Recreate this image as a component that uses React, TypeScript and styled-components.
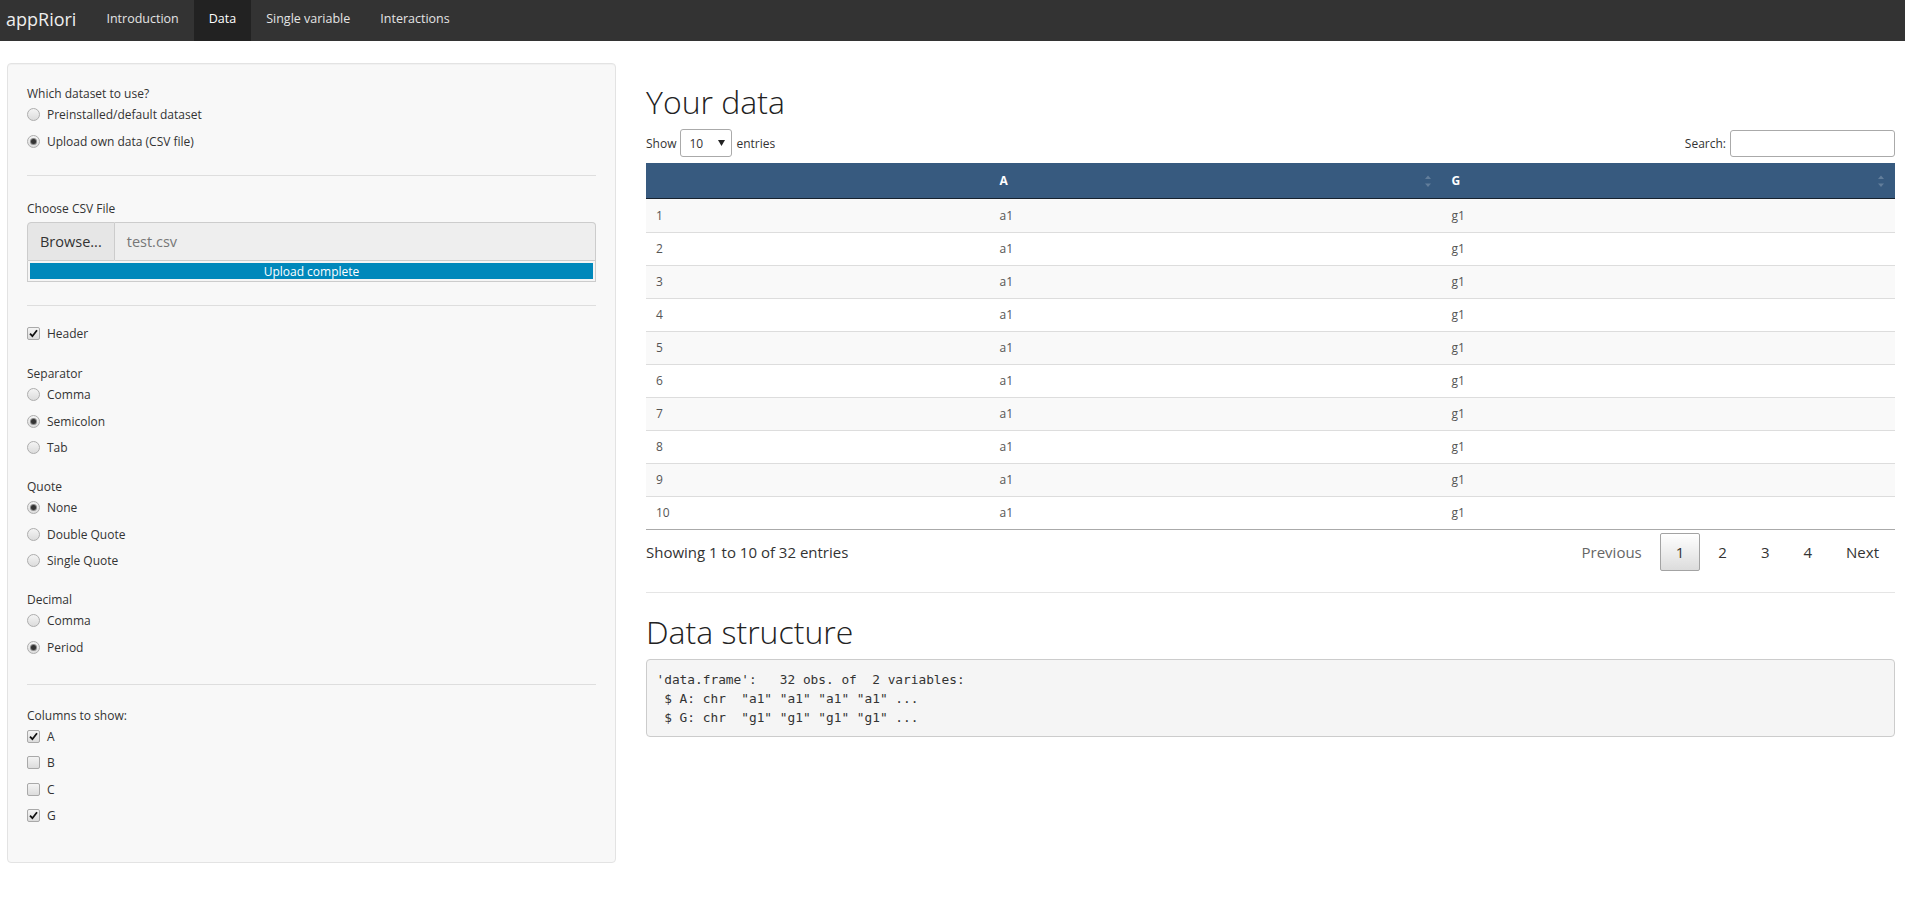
import React from 'react';
import styled, { createGlobalStyle } from 'styled-components';

const GlobalStyle = createGlobalStyle`
  html, body { margin: 0; padding: 0; background: #fff; }
  body { font-family: "Open Sans", "Liberation Sans", sans-serif; color: #333; }
  *, *::before, *::after { box-sizing: border-box; }
`;

const NavBar = styled.nav`
  display: flex;
  align-items: stretch;
  height: 41px;
  background: #333;
`;

const Brand = styled.div`
  display: flex;
  align-items: center;
  padding: 0 15px 4px 6px;
  font-size: 18px;
  color: #eee;
`;

const NavLink = styled.a<{ $active?: boolean }>`
  display: flex;
  align-items: center;
  padding: 0 15px 4px;
  font-size: 12.5px;
  color: ${p => (p.$active ? '#fff' : '#e4e4e4')};
  background: ${p => (p.$active ? '#222' : 'transparent')};
  text-decoration: none;
`;

const Page = styled.div`
  display: flex;
  align-items: flex-start;
  gap: 30px;
  padding: 22px 10px 40px 7px;
`;

const Sidebar = styled.aside`
  flex: none;
  width: 609px;
  background: #f8f8f8;
  border: 1px solid #e3e3e3;
  border-radius: 4px;
  padding: 21px 19px 38px;
  box-shadow: inset 0 1px 1px rgba(0, 0, 0, 0.03);
`;

const Group = styled.div<{ $gap?: number }>`
  display: flex;
  flex-direction: column;
  margin-bottom: ${p => p.$gap ?? 23}px;
`;

const GroupLabel = styled.div`
  font-size: 12px;
  line-height: 17px;
  margin-bottom: 4px;
  color: #333;
`;

const Options = styled.div`
  display: flex;
  flex-direction: column;
  gap: 9.5px;
`;

const Option = styled.label`
  display: flex;
  align-items: center;
  gap: 7px;
  height: 17px;
  font-size: 12px;
  color: #333;
`;

const Radio = styled.span<{ $checked?: boolean }>`
  position: relative;
  flex: none;
  width: 13px;
  height: 13px;
  border-radius: 50%;
  border: 1px solid #adadad;
  background: linear-gradient(#f4f4f4, #dcdcdc);
  &::after {
    content: '';
    display: ${p => (p.$checked ? 'block' : 'none')};
    position: absolute;
    left: 3px;
    top: 3px;
    width: 5px;
    height: 5px;
    border-radius: 50%;
    background: #333;
    box-shadow: 0 0 0 1px #8a8a8a;
  }
`;

const CheckBox = styled.span`
  display: flex;
  align-items: center;
  justify-content: center;
  flex: none;
  width: 13px;
  height: 13px;
  border-radius: 2px;
  border: 1px solid #a9a9a9;
  background: linear-gradient(#f4f4f4, #dcdcdc);
`;

const Divider = styled.hr<{ $before: number; $after: number }>`
  border: 0;
  border-top: 1px solid #dedede;
  margin: ${p => p.$before}px 0 ${p => p.$after}px;
`;

const FileGroup = styled.div`
  display: flex;
  height: 39px;
  margin-top: 1px;
`;

const BrowseButton = styled.span`
  display: flex;
  align-items: center;
  padding: 0 12px;
  font-size: 14.5px;
  color: #333;
  background: #e6e6e6;
  border: 1px solid #ccc;
  border-radius: 4px 0 0 0;
`;

const FileName = styled.span`
  flex: 1;
  display: flex;
  align-items: center;
  padding: 0 12px;
  font-size: 14.5px;
  color: #777;
  background: #eee;
  border: 1px solid #ccc;
  border-left: 0;
  border-radius: 0 4px 0 0;
`;

const Progress = styled.div`
  border: 1px solid #ccc;
  border-top: 0;
  background: #f5f5f5;
  padding: 2px;
`;

const ProgressBar = styled.div`
  height: 16px;
  background: #0088bb;
  color: #fff;
  font-size: 12px;
  line-height: 17px;
  text-align: center;
`;

const Main = styled.main`
  flex: 1;
  min-width: 0;
`;

const Heading = styled.h2`
  margin: 22px 0 11px;
  font-size: 32px;
  font-weight: 300;
  line-height: 33px;
  color: #222;
`;

const Toolbar = styled.div`
  display: flex;
  justify-content: space-between;
  align-items: center;
  height: 28px;
  margin-bottom: 6px;
  font-size: 12px;
  color: #333;
`;

const Inline = styled.div`
  display: flex;
  align-items: center;
  gap: 4px;
`;

const FakeSelect = styled.div`
  display: flex;
  align-items: center;
  justify-content: space-between;
  width: 52px;
  height: 28px;
  padding: 0 6px 0 8px;
  border: 1px solid #aaa;
  border-radius: 3px;
  background: #fff;
  font-size: 12px;
  color: #333;
`;

const SearchInput = styled.input`
  width: 165px;
  height: 27px;
  border: 1px solid #aaa;
  border-radius: 3px;
  background: #fff;
  margin: 0;
`;

const Table = styled.table`
  width: 100%;
  border-collapse: separate;
  border-spacing: 0;
  table-layout: fixed;
  font-size: 12px;
`;

const Th = styled.th<{ $w: string }>`
  width: ${p => p.$w};
  height: 36px;
  padding: 0 10px;
  background: #375a7f;
  color: #fff;
  font-weight: 700;
  text-align: left;
  border-bottom: 1px solid #17222e;
`;

const HeadInner = styled.div`
  display: flex;
  align-items: center;
`;

const SortIcon = styled.svg`
  margin-left: auto;
  flex: none;
`;

const Td = styled.td<{ $odd: boolean; $first: boolean; $last: boolean }>`
  padding: 8px 10px;
  line-height: 16px;
  color: #555;
  background: ${p => (p.$odd ? '#f9f9f9' : '#fff')};
  border-top: 1px solid ${p => (p.$first ? 'transparent' : '#ddd')};
  border-bottom: ${p => (p.$last ? '1px solid #aaa' : '0')};
`;

const Footer = styled.div`
  display: flex;
  justify-content: space-between;
  align-items: center;
  padding-top: 3px;
`;

const Info = styled.div`
  font-size: 15px;
  color: #333;
`;

const Pagination = styled.div`
  display: flex;
`;

const PageButton = styled.span<{ $current?: boolean; $disabled?: boolean }>`
  margin-left: 2px;
  padding: 7px 15px;
  font-size: 15px;
  line-height: 22px;
  border-radius: 2px;
  border: 1px solid ${p => (p.$current ? '#a3a3a3' : 'transparent')};
  background: ${p => (p.$current ? 'linear-gradient(#fff, #dcdcdc)' : 'transparent')};
  color: ${p => (p.$disabled ? '#666' : '#333')};
`;

const Rule = styled.hr`
  border: 0;
  border-top: 1px solid #e5e5e5;
  margin: 21px 0 0;
`;

const Pre = styled.pre`
  margin: 0;
  padding: 9.5px;
  background: #f5f5f5;
  border: 1px solid #ccc;
  border-radius: 4px;
  font-family: "DejaVu Sans Mono", "Liberation Mono", monospace;
  font-size: 12.8px;
  line-height: 19px;
  color: #333;
  white-space: pre;
`;

const Check = () => (
  <svg width="9" height="9" viewBox="0 0 9 9">
    <path d="M1 4.6 L3.4 7.2 L8 1.2" fill="none" stroke="#111" strokeWidth="1.8" />
  </svg>
);

const Sort = () => (
  <SortIcon width="8" height="14" viewBox="0 0 8 14">
    <path d="M1 5 L4 1.5 L7 5 Z" fill="rgba(255,255,255,0.22)" />
    <path d="M1 9.5 L4 13 L7 9.5 Z" fill="rgba(255,255,255,0.22)" />
  </SortIcon>
);

type RadioGroupProps = { label: string; options: string[]; selected: number; gap?: number };

const RadioGroup = ({ label, options, selected, gap }: RadioGroupProps) => (
  <Group $gap={gap}>
    <GroupLabel>{label}</GroupLabel>
    <Options>
      {options.map((o, i) => (
        <Option key={o}>
          <Radio $checked={i === selected} />
          {o}
        </Option>
      ))}
    </Options>
  </Group>
);

const CheckItem = ({ label, checked }: { label: string; checked: boolean }) => (
  <Option>
    <CheckBox>{checked && <Check />}</CheckBox>
    {label}
  </Option>
);

const rows = Array.from({ length: 10 }, (_, i) => i + 1);

export default function App() {
  return (
    <>
      <GlobalStyle />
      <NavBar>
        <Brand>appRiori</Brand>
        <NavLink>Introduction</NavLink>
        <NavLink $active>Data</NavLink>
        <NavLink>Single variable</NavLink>
        <NavLink>Interactions</NavLink>
      </NavBar>
      <Page>
        <Sidebar>
          <RadioGroup
            label="Which dataset to use?"
            options={['Preinstalled/default dataset', 'Upload own data (CSV file)']}
            selected={1}
            gap={0}
          />
          <Divider $before={25.5} $after={24} />
          <Group $gap={0}>
            <GroupLabel>Choose CSV File</GroupLabel>
            <FileGroup>
              <BrowseButton>Browse...</BrowseButton>
              <FileName>test.csv</FileName>
            </FileGroup>
            <Progress>
              <ProgressBar>Upload complete</ProgressBar>
            </Progress>
          </Group>
          <Divider $before={23} $after={19} />
          <Group>
            <Options>
              <CheckItem label="Header" checked />
            </Options>
          </Group>
          <RadioGroup label="Separator" options={['Comma', 'Semicolon', 'Tab']} selected={1} gap={22} />
          <RadioGroup label="Quote" options={['None', 'Double Quote', 'Single Quote']} selected={0} gap={22} />
          <RadioGroup label="Decimal" options={['Comma', 'Period']} selected={1} gap={0} />
          <Divider $before={28} $after={22} />
          <Group $gap={0}>
            <GroupLabel>Columns to show:</GroupLabel>
            <Options>
              <CheckItem label="A" checked />
              <CheckItem label="B" checked={false} />
              <CheckItem label="C" checked={false} />
              <CheckItem label="G" checked />
            </Options>
          </Group>
        </Sidebar>
        <Main>
          <Heading>Your data</Heading>
          <Toolbar>
            <Inline>
              Show
              <FakeSelect>
                10
                <svg width="7" height="6" viewBox="0 0 7 6">
                  <path d="M0 0 H7 L3.5 6 Z" fill="#222" />
                </svg>
              </FakeSelect>
              entries
            </Inline>
            <Inline>
              Search:
              <SearchInput type="search" />
            </Inline>
          </Toolbar>
          <Table>
            <thead>
              <tr>
                <Th $w="27.5%" />
                <Th $w="36.2%">
                  <HeadInner>
                    A
                    <Sort />
                  </HeadInner>
                </Th>
                <Th $w="36.3%">
                  <HeadInner>
                    G
                    <Sort />
                  </HeadInner>
                </Th>
              </tr>
            </thead>
            <tbody>
              {rows.map(r => (
                <tr key={r}>
                  <Td $odd={r % 2 === 1} $first={r === 1} $last={r === 10}>{r}</Td>
                  <Td $odd={r % 2 === 1} $first={r === 1} $last={r === 10}>a1</Td>
                  <Td $odd={r % 2 === 1} $first={r === 1} $last={r === 10}>g1</Td>
                </tr>
              ))}
            </tbody>
          </Table>
          <Footer>
            <Info>Showing 1 to 10 of 32 entries</Info>
            <Pagination>
              <PageButton $disabled>Previous</PageButton>
              <PageButton $current>1</PageButton>
              <PageButton>2</PageButton>
              <PageButton>3</PageButton>
              <PageButton>4</PageButton>
              <PageButton>Next</PageButton>
            </Pagination>
          </Footer>
          <Rule />
          <Heading>Data structure</Heading>
          <Pre>{`'data.frame':   32 obs. of  2 variables:
 $ A: chr  "a1" "a1" "a1" "a1" ...
 $ G: chr  "g1" "g1" "g1" "g1" ...`}</Pre>
        </Main>
      </Page>
    </>
  );
}
